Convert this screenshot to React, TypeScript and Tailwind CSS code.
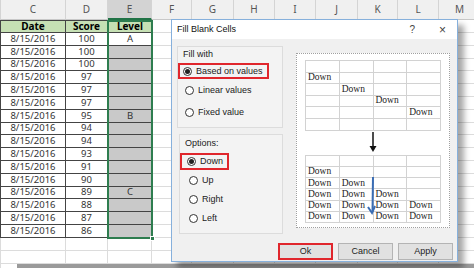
import React from "react";

const COLS = [
  { l: "", w: 1 },
  { l: "C", w: 65 },
  { l: "D", w: 42 },
  { l: "E", w: 44 },
  { l: "F", w: 40 },
  { l: "G", w: 42 },
  { l: "H", w: 41 },
  { l: "I", w: 41 },
  { l: "J", w: 42 },
  { l: "K", w: 40 },
  { l: "L", w: 41 },
  { l: "M", w: 42 },
];

const scores = [100, 100, 100, 97, 97, 97, 95, 94, 94, 93, 91, 90, 89, 88, 87, 86];
const levels: Record<number, string> = { 0: "A", 6: "B", 12: "C" };

const sheetFont = { fontFamily: '"Noto Sans", "Open Sans", sans-serif' };
const uiFont = { fontFamily: '"Liberation Sans", "Noto Sans", sans-serif' };
const serifFont = { fontFamily: '"Liberation Serif", "DejaVu Serif", serif' };

function HeaderRow() {
  return (
    <div className="flex h-[20px] bg-[#f0f0f0]" style={sheetFont}>
      {COLS.map((c, i) => (
        <div
          key={i}
          style={{ width: c.w }}
          className={`shrink-0 flex items-center justify-center text-[10px] text-[#555] border-r border-[#d4d4d4] border-b ${
            c.l === "E" ? "bg-[#d3d3d3] border-b-[#217346] border-b-2" : "border-b-[#c8c8c8]"
          }`}
        >
          {c.l}
        </div>
      ))}
    </div>
  );
}

function EmptyCells({ from, h }: { from: number; h: number }) {
  return (
    <>
      {COLS.slice(from).map((c, i) => (
        <div
          key={i}
          style={{ width: c.w, height: h }}
          className="shrink-0 border-r border-b border-[#dcdcdc]"
        />
      ))}
    </>
  );
}

function TitleRow() {
  return (
    <div className="flex h-[13px]" style={sheetFont}>
      <div className="w-[1px] shrink-0 bg-[#444]" />
      <div className="w-[65px] shrink-0 bg-[#c6e0b4] border-r border-b border-t border-[#444] flex items-center justify-center text-[10px] font-bold text-black">
        Date
      </div>
      <div className="w-[42px] shrink-0 bg-[#c6e0b4] border-r border-b border-t border-[#444] flex items-center justify-center text-[10px] font-bold text-black">
        Score
      </div>
      <div className="w-[44px] shrink-0 bg-[#c6e0b4] border-b border-t border-[#444] flex items-center justify-center text-[10px] font-bold text-black">
        Level
      </div>
      <EmptyCells from={4} h={13} />
    </div>
  );
}

function DataRow({ i, s }: { i: number; s: number }) {
  const lv = levels[i];
  return (
    <div className="flex h-[12.8px]" style={sheetFont}>
      <div className="w-[1px] shrink-0 bg-[#444]" />
      <div className="w-[65px] shrink-0 border-r border-b border-[#444] flex items-center justify-center text-[9.5px] text-[#333]">
        8/15/2016
      </div>
      <div className="w-[42px] shrink-0 border-r border-b border-[#444] flex items-center justify-center text-[9.5px] text-[#333]">
        {s}
      </div>
      <div
        className={`w-[44px] shrink-0 border-b border-[#444] flex items-center justify-center text-[9.5px] text-[#333] ${
          i === 0 ? "bg-white" : "bg-[#c9c9c9]"
        }`}
      >
        {lv ?? ""}
      </div>
      <EmptyCells from={4} h={12.8} />
    </div>
  );
}

function BlankRow() {
  return (
    <div className="flex h-[13px]">
      <EmptyCells from={0} h={13} />
    </div>
  );
}

function Radio({ checked, label }: { checked?: boolean; label: string }) {
  return (
    <div className="flex items-center gap-[4px] whitespace-nowrap">
      <div className="w-[9px] h-[9px] shrink-0 rounded-full border border-[#333] bg-white flex items-center justify-center">
        {checked && <div className="w-[5px] h-[5px] rounded-full bg-[#222]" />}
      </div>
      <span className="text-[9px] text-[#222] leading-none">{label}</span>
    </div>
  );
}

function PreviewTable({ rows, rowH }: { rows: number[][]; rowH: number }) {
  return (
    <div className="border-t border-l border-[#d2d2d2] w-[136px]">
      {rows.map((cols, r) => (
        <div key={r} className="flex" style={{ height: rowH }}>
          {[0, 1, 2, 3].map((c) => (
            <div
              key={c}
              className="w-[34px] border-r border-b border-[#d2d2d2] text-[9.5px] leading-none flex items-center pl-[2px] text-[#222]"
              style={serifFont}
            >
              {cols.includes(c) ? "Down" : ""}
            </div>
          ))}
        </div>
      ))}
    </div>
  );
}

function Dialog() {
  return (
    <div
      className="absolute left-[171px] top-[19px] w-[287px] h-[243px] border border-[#86b0dc] bg-[#f0f0f0] flex flex-col shadow-[6px_6px_6px_rgba(0,0,0,0.35)]"
      style={uiFont}
    >
      <div className="h-[19px] bg-white flex items-center px-[5px] text-[9px] text-[#111]">
        <span>Fill Blank Cells</span>
        <span className="ml-auto mr-[24px] text-[10px] text-[#444]">?</span>
        <span className="mr-[6px] text-[12px] text-[#444] leading-none">×</span>
      </div>
      <div className="flex pl-[5px] pt-[7px]">
        <div className="w-[106px] flex flex-col gap-[6px]">
          <div className="h-[82px] border border-[#dcdcdc] bg-[#f3f3f3] pl-[5px] pt-[2px]">
            <div className="text-[9px] text-[#222] leading-[10px]">Fill with</div>
            <div className="mt-[4px] -ml-[5px] w-[91px] h-[16px] border-2 border-[#e0262c] flex items-center pl-[3px]">
              <Radio checked label="Based on values" />
            </div>
            <div className="mt-[7px] pl-[2px]">
              <Radio label="Linear values" />
            </div>
            <div className="mt-[13px] pl-[2px]">
              <Radio label="Fixed value" />
            </div>
          </div>
          <div className="ml-[2px] h-[100px] border border-[#dcdcdc] bg-[#f3f3f3] pl-[5px] pt-[3px]">
            <div className="text-[9px] text-[#222] leading-[10px]">Options:</div>
            <div className="mt-[5px] -ml-[5px] w-[49px] h-[17px] border-2 border-[#e0262c] flex items-center pl-[5px]">
              <Radio checked label="Down" />
            </div>
            <div className="mt-[6px] pl-[4px]">
              <Radio label="Up" />
            </div>
            <div className="mt-[10px] pl-[4px]">
              <Radio label="Right" />
            </div>
            <div className="mt-[10px] pl-[4px]">
              <Radio label="Left" />
            </div>
          </div>
        </div>
        <div className="ml-[13px] mt-[7px] w-[154px] h-[175px] border border-dotted border-[#a0a0a0] bg-white pl-[8px] pt-[6px] relative">
          <PreviewTable rows={[[], [0], [1], [2], [3], []]} rowH={11.6} />
          <div className="h-[24px] relative">
            <svg className="absolute left-[63px] top-[1px]" width="10" height="22" viewBox="0 0 10 22">
              <line x1="5" y1="0" x2="5" y2="16" stroke="#111" strokeWidth="1.5" />
              <path d="M1.5 14 L5 20 L8.5 14 Z" fill="#111" />
            </svg>
          </div>
          <PreviewTable
            rows={[[], [0], [0, 1], [0, 1, 2], [0, 1, 2, 3], [0, 1, 2, 3]]}
            rowH={11.3}
          />
          <svg className="absolute left-[68px] top-[122px]" width="12" height="40" viewBox="0 0 12 40">
            <path d="M8 1 L7.5 36" stroke="#3a6db4" strokeWidth="2" fill="none" />
            <path d="M3 31 L7 37 L10 30" stroke="#3a6db4" strokeWidth="2" fill="none" />
          </svg>
        </div>
      </div>
      <div className="flex justify-end gap-[5px] pr-[4px] mt-[9px]">
        <div className="w-[55px] h-[17px] border-2 border-[#e0262c] bg-[#e1e1e1] flex items-center justify-center text-[9px] text-[#222]">
          Ok
        </div>
        <div className="w-[55px] h-[17px] border border-[#b4b4b4] bg-[#e1e1e1] flex items-center justify-center text-[9px] text-[#222]">
          Cancel
        </div>
        <div className="w-[55px] h-[17px] border border-[#b4b4b4] bg-[#e1e1e1] flex items-center justify-center text-[9px] text-[#222]">
          Apply
        </div>
      </div>
    </div>
  );
}

export default function App() {
  return (
    <div className="relative w-[474px] h-[268px] overflow-hidden bg-white">
      <HeaderRow />
      <TitleRow />
      {scores.map((s, i) => (
        <DataRow key={i} i={i} s={s} />
      ))}
      <BlankRow />
      <BlankRow />
      <BlankRow />
      <div className="absolute left-[107px] top-[20px] w-[46px] h-[219px] border-2 border-[#2e7d4f] pointer-events-none" />
      <div className="absolute left-[150px] top-[236px] w-[5px] h-[5px] bg-[#2e7d4f] border border-white" />
      <div className="absolute left-[17px] top-[264px] w-[460px] h-[4px] bg-[#9a9a9a]" />
      <Dialog />
    </div>
  );
}
